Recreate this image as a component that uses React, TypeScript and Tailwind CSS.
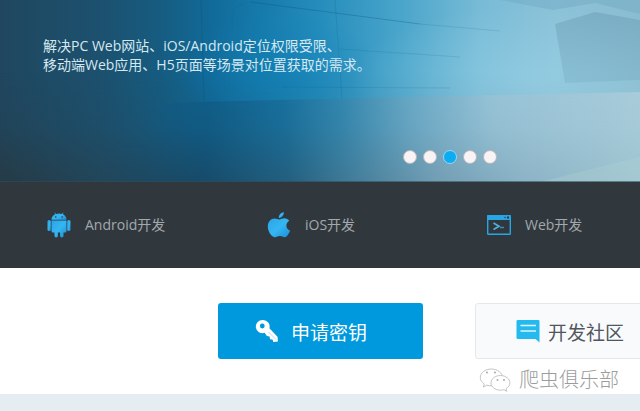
import React from 'react';

function HeroBackdrop() {
  return (
    <svg
      aria-hidden="true"
      className="absolute inset-0 h-full w-full"
      viewBox="0 0 640 182"
      preserveAspectRatio="none"
    >
      <defs>
        <linearGradient id="upper" x1="0" x2="1" y1="0" y2="0">
          <stop offset="0" stopColor="#20475f" />
          <stop offset="0.16" stopColor="#1c516f" />
          <stop offset="0.25" stopColor="#165c80" />
          <stop offset="0.33" stopColor="#116a99" />
          <stop offset="0.41" stopColor="#167bab" />
          <stop offset="0.5" stopColor="#258dbc" />
          <stop offset="0.63" stopColor="#4ba6cb" />
          <stop offset="0.75" stopColor="#78bbd6" />
          <stop offset="0.87" stopColor="#8bc2d8" />
          <stop offset="1" stopColor="#8bbdd0" />
        </linearGradient>
        <linearGradient id="surface" x1="0" x2="1" y1="0" y2="0">
          <stop offset="0" stopColor="#0f5f8b" stopOpacity="0" />
          <stop offset="0.06" stopColor="#0f5c87" stopOpacity="0.6" />
          <stop offset="0.13" stopColor="#0f608c" />
          <stop offset="0.28" stopColor="#1672a1" />
          <stop offset="0.4" stopColor="#3289b2" />
          <stop offset="0.53" stopColor="#66a9c7" />
          <stop offset="0.7" stopColor="#98c5d9" />
          <stop offset="1" stopColor="#a9cddb" />
        </linearGradient>
        <linearGradient id="lower" x1="0" x2="1" y1="0" y2="0">
          <stop offset="0" stopColor="#263b46" />
          <stop offset="0.16" stopColor="#22465a" />
          <stop offset="0.32" stopColor="#174b69" />
          <stop offset="0.45" stopColor="#245f7e" />
          <stop offset="0.55" stopColor="#437c98" />
          <stop offset="0.68" stopColor="#729db3" />
          <stop offset="0.82" stopColor="#8cb3c5" />
          <stop offset="1" stopColor="#9dc3cf" />
        </linearGradient>
        <linearGradient id="fade" x1="0" x2="0" y1="0" y2="1">
          <stop offset="0.4" stopColor="#000" />
          <stop offset="0.7" stopColor="#444" />
          <stop offset="1" stopColor="#fff" />
        </linearGradient>
        <mask id="fadeMask">
          <rect width="640" height="182" fill="url(#fade)" />
        </mask>
        <radialGradient id="glow">
          <stop offset="0" stopColor="#a2dbef" stopOpacity="0.4" />
          <stop offset="1" stopColor="#a2dbef" stopOpacity="0" />
        </radialGradient>
        <radialGradient id="deepGlow">
          <stop offset="0" stopColor="#0d80b9" stopOpacity="0.45" />
          <stop offset="1" stopColor="#0d80b9" stopOpacity="0" />
        </radialGradient>
        <linearGradient id="block" x1="0" x2="0" y1="0" y2="1">
          <stop offset="0" stopColor="#6395ae" stopOpacity="0.4" />
          <stop offset="1" stopColor="#6395ae" stopOpacity="0.2" />
        </linearGradient>
      </defs>
      <rect width="640" height="182" fill="url(#upper)" />
      <ellipse cx="280" cy="75" rx="100" ry="65" fill="url(#deepGlow)" />
      <ellipse cx="530" cy="80" rx="180" ry="75" fill="url(#glow)" />
      <path d="M154 103 L320 99 L640 92 V182 H144 V112 Q144 104 154 103Z" fill="url(#surface)" />
      <rect width="640" height="182" fill="url(#lower)" mask="url(#fadeMask)" />
      <path d="M500 0 L553 10 L595 3 L640 14 V0Z" fill="#6ba4bd" fillOpacity="0.35" />
      <path d="M555 24 L595 12 L640 20 V80 L565 83Z" fill="url(#block)" />
      <path d="M540 182 L640 157 V182Z" fill="#b3d3d3" fillOpacity="0.3" />
      <g fill="none" stroke="#0a4f77">
        <path d="M201 0 L204 102" strokeOpacity="0.28" />
        <path d="M232 30 V14 Q233 6 246 3" strokeOpacity="0.12" />
        <path d="M250 2 L320 11 L420 24" strokeOpacity="0.3" />
        <path d="M420 24 L500 31" strokeOpacity="0.14" />
        <path d="M335 0 L342 98" strokeOpacity="0.14" />
        <path d="M282 87 L450 88" strokeOpacity="0.14" />
        <path d="M340 49 L460 57" strokeOpacity="0.14" />
        <path d="M100 148 L145 146" strokeOpacity="0.18" />
      </g>
      <rect y="181" width="640" height="1" fill="#2f4b5a" fillOpacity="0.6" />
    </svg>
  );
}

function IconGradient({ id }: { id: string }) {
  return (
    <defs>
      <linearGradient id={id} x1="0" x2="1" y1="0" y2="1">
        <stop offset="0" stopColor="#2aa3e6" />
        <stop offset="0.5" stopColor="#35b6f2" />
        <stop offset="1" stopColor="#1a8fd6" />
      </linearGradient>
    </defs>
  );
}

function AndroidIcon() {
  return (
    <svg aria-hidden="true" className="h-[26px] w-6 shrink-0" viewBox="0 0 24 26">
      <IconGradient id="androidFill" />
      <g fill="url(#androidFill)">
        <path d="M4.500 7.800C4.500 5.100 6.100 3 8.400 2.100L7.500.9l.4-.3 1.200 1.300a9 9 0 0 1 5.800 0L16.100.6l.4.3-.9 1.200c2.300.9 3.900 3 3.900 5.700Z" />
        <path d="M4.500 8.500h15V19a1.500 1.500 0 0 1-1.500 1.500h-1.500v3.300a1.700 1.700 0 0 1-3.400 0v-3.300h-2.200v3.300a1.700 1.700 0 0 1-3.400 0v-3.300H6A1.500 1.500 0 0 1 4.500 19Z" />
        <rect x="0.500" y="8" width="3.300" height="11" rx="1.600" />
        <rect x="20.200" y="8" width="3.300" height="11" rx="1.600" />
      </g>
      <circle cx="8.800" cy="5" r="0.800" fill="#2f383e" />
      <circle cx="15.200" cy="5" r="0.800" fill="#2f383e" />
    </svg>
  );
}

function AppleIcon() {
  return (
    <svg aria-hidden="true" className="h-[26px] w-6 shrink-0" viewBox="0 0 24 26">
      <IconGradient id="appleFill" />
      <g fill="url(#appleFill)">
        <path d="M16.800.3c.3 3-2.300 5.700-5 5.600C11.500 3.100 14.100.5 16.800.3Z" />
        <path d="M12.300 7.500c1.300 0 2.800-1.200 5-1.200 2 0 3.800.9 5 2.500-4.300 2.500-3.600 8.300.8 9.900-.9 2.400-3 6.300-5.300 6.500-1.700.1-2.600-1.100-4.900-1.100s-3.200 1.100-4.900 1.100C4.700 25.200.8 19.500.8 14.400.8 9.600 4 6.600 7.400 6.500c2 0 3.600 1 4.900 1Z" />
      </g>
    </svg>
  );
}

function TerminalIcon() {
  return (
    <svg aria-hidden="true" className="h-5 w-6 shrink-0" viewBox="0 0 24 20">
      <rect x="0.700" y="0.700" width="22.600" height="18.600" rx="0.800" fill="none" stroke="#28a5e4" strokeWidth="1.400" />
      <path d="M0 1a1 1 0 0 1 1-1h22a1 1 0 0 1 1 1v4H0Z" fill="#28a5e4" />
      <circle cx="18" cy="2.500" r="0.700" fill="#2f383e" />
      <rect x="20" y="1.500" width="2" height="2" fill="#2f383e" />
      <path d="M6.500 8 12 11.300 6.500 14.500" fill="none" stroke="#4fb0dc" strokeWidth="1.700" />
      <path d="M13 12.500h4" stroke="#3a8fb9" strokeWidth="1.400" />
    </svg>
  );
}

function KeyIcon() {
  return (
    <svg aria-hidden="true" className="size-6 shrink-0" viewBox="0 0 24 24">
      <path
        fillRule="evenodd"
        fill="#fff"
        d="M8 1a6.500 6.500 0 0 1 6.400 8.200l8.100 8.600.5 4.800-4.800.3-.6-2.400-2.600-.3-.4-2.700-2.700-.4-2.300-3.300A6.600 6.600 0 1 1 8 1ZM7.300 4.600a2.400 2.400 0 1 0 0 4.800 2.400 2.400 0 0 0 0-4.800Z"
      />
      <path d="m13.500 13 7.500 7.500" stroke="#0099dd" strokeOpacity="0.4" strokeWidth="0.800" />
    </svg>
  );
}

function CommentIcon() {
  return (
    <svg aria-hidden="true" className="size-6 shrink-0" viewBox="0 0 24 24">
      <path d="M1.500 1h20.800a1.200 1.200 0 0 1 1.200 1.200V23.500L19.500 20h-18A1.200 1.200 0 0 1 .5 18.800V2.200A1.200 1.200 0 0 1 1.500 1Z" fill="#24baf0" />
      <path d="M4.500 6.500h15.500M4.500 12h15.500" stroke="#dff5fd" strokeWidth="1.400" />
    </svg>
  );
}

function WeChatMark() {
  return (
    <svg aria-hidden="true" className="h-6 w-8 shrink-0" viewBox="0 0 32 24" fill="#fff" stroke="#c4c4c4">
      <path d="M12.500 1C6.300 1 1.300 4.700 1.300 9.500c0 2.700 1.500 4.900 4 6.500l-1 3 3.600-1.800c1.500.4 3 .6 4.600.6 6 0 11-3.700 11-8.300S18.500 1 12.500 1Z" />
      <path d="M21.500 7.500c-5.300 0-9.500 3.300-9.500 7.400s4.200 7.300 9.500 7.300c1.200 0 2.300-.2 3.300-.5l3 1.600-.8-2.600c2.400-1.400 3.900-3.500 3.900-5.800 0-4.100-4.200-7.400-9.400-7.400Z" />
      <g fill="#aaa" stroke="none">
        <circle cx="8" cy="4.500" r="1" />
        <circle cx="16" cy="4.500" r="1" />
        <circle cx="18.500" cy="12" r="1" />
        <circle cx="25" cy="12" r="1" />
      </g>
    </svg>
  );
}

const slides = [1, 2, 3, 4, 5];

const platforms = [
  { label: 'Android开发', icon: <AndroidIcon /> },
  { label: 'iOS开发', icon: <AppleIcon /> },
  { label: 'Web开发', icon: <TerminalIcon /> },
];

export default function App() {
  const [active, setActive] = React.useState(3);

  return (
    <div className="relative min-h-screen overflow-hidden bg-[#e6edf2] font-['Open_Sans','Noto_Sans_CJK_SC',sans-serif]">
      <section className="relative bg-[#1c5170]">
        <HeroBackdrop />
        <div className="relative flex flex-col pt-9 pb-[18px]">
          <p className="pl-[43px] text-sm leading-[19px] whitespace-nowrap text-[#d5e8f1]">
            解决PC Web网站、iOS/Android定位权限受限、
            <br />
            移动端Web应用、H5页面等场景对位置获取的需求。
          </p>
          <div className="mt-[76px] flex gap-[6px] pl-[403px]">
            {slides.map((n) => (
              <button
                key={n}
                type="button"
                aria-label={`${n}`}
                onClick={() => setActive(n)}
                className={
                  n === active
                    ? 'size-[14px] rounded-full border border-[#9bd6ee] bg-[#0bacf3]'
                    : 'size-[14px] rounded-full border border-[#b9b6b8] bg-[#f8f3f4]'
                }
              />
            ))}
          </div>
        </div>
      </section>

      <nav className="flex h-[86px] items-center bg-[#30383e] pl-[47px]">
        {platforms.map(({ label, icon }) => (
          <a
            key={label}
            href="#"
            className="flex w-[220px] shrink-0 items-center gap-[14px] text-sm leading-5 text-[#a3a8ab]"
          >
            {icon}
            {label}
          </a>
        ))}
      </nav>

      <main className="flex gap-[52px] bg-white pt-[35px] pb-[35px] pl-[218px]">
        <button
          type="button"
          className="flex h-14 w-[205px] shrink-0 items-center gap-3 rounded-[3px] bg-[#0099dd] pl-[37px] text-[19px] leading-7 text-white"
        >
          <KeyIcon />
          <span className="pt-1">申请密钥</span>
        </button>
        <button
          type="button"
          className="flex h-14 w-[205px] shrink-0 items-center gap-2 rounded-[3px] border border-[#e6e9eb] bg-[#f8fafc] pl-10 text-[19px] leading-7 text-[#50565c]"
        >
          <CommentIcon />
          <span className="pt-1">开发社区</span>
        </button>
      </main>

      <div className="absolute top-[366px] right-[21px] flex items-center gap-2 text-xl leading-7 font-light text-[#9c9c9c]">
        <WeChatMark />
        爬虫俱乐部
      </div>
    </div>
  );
}
